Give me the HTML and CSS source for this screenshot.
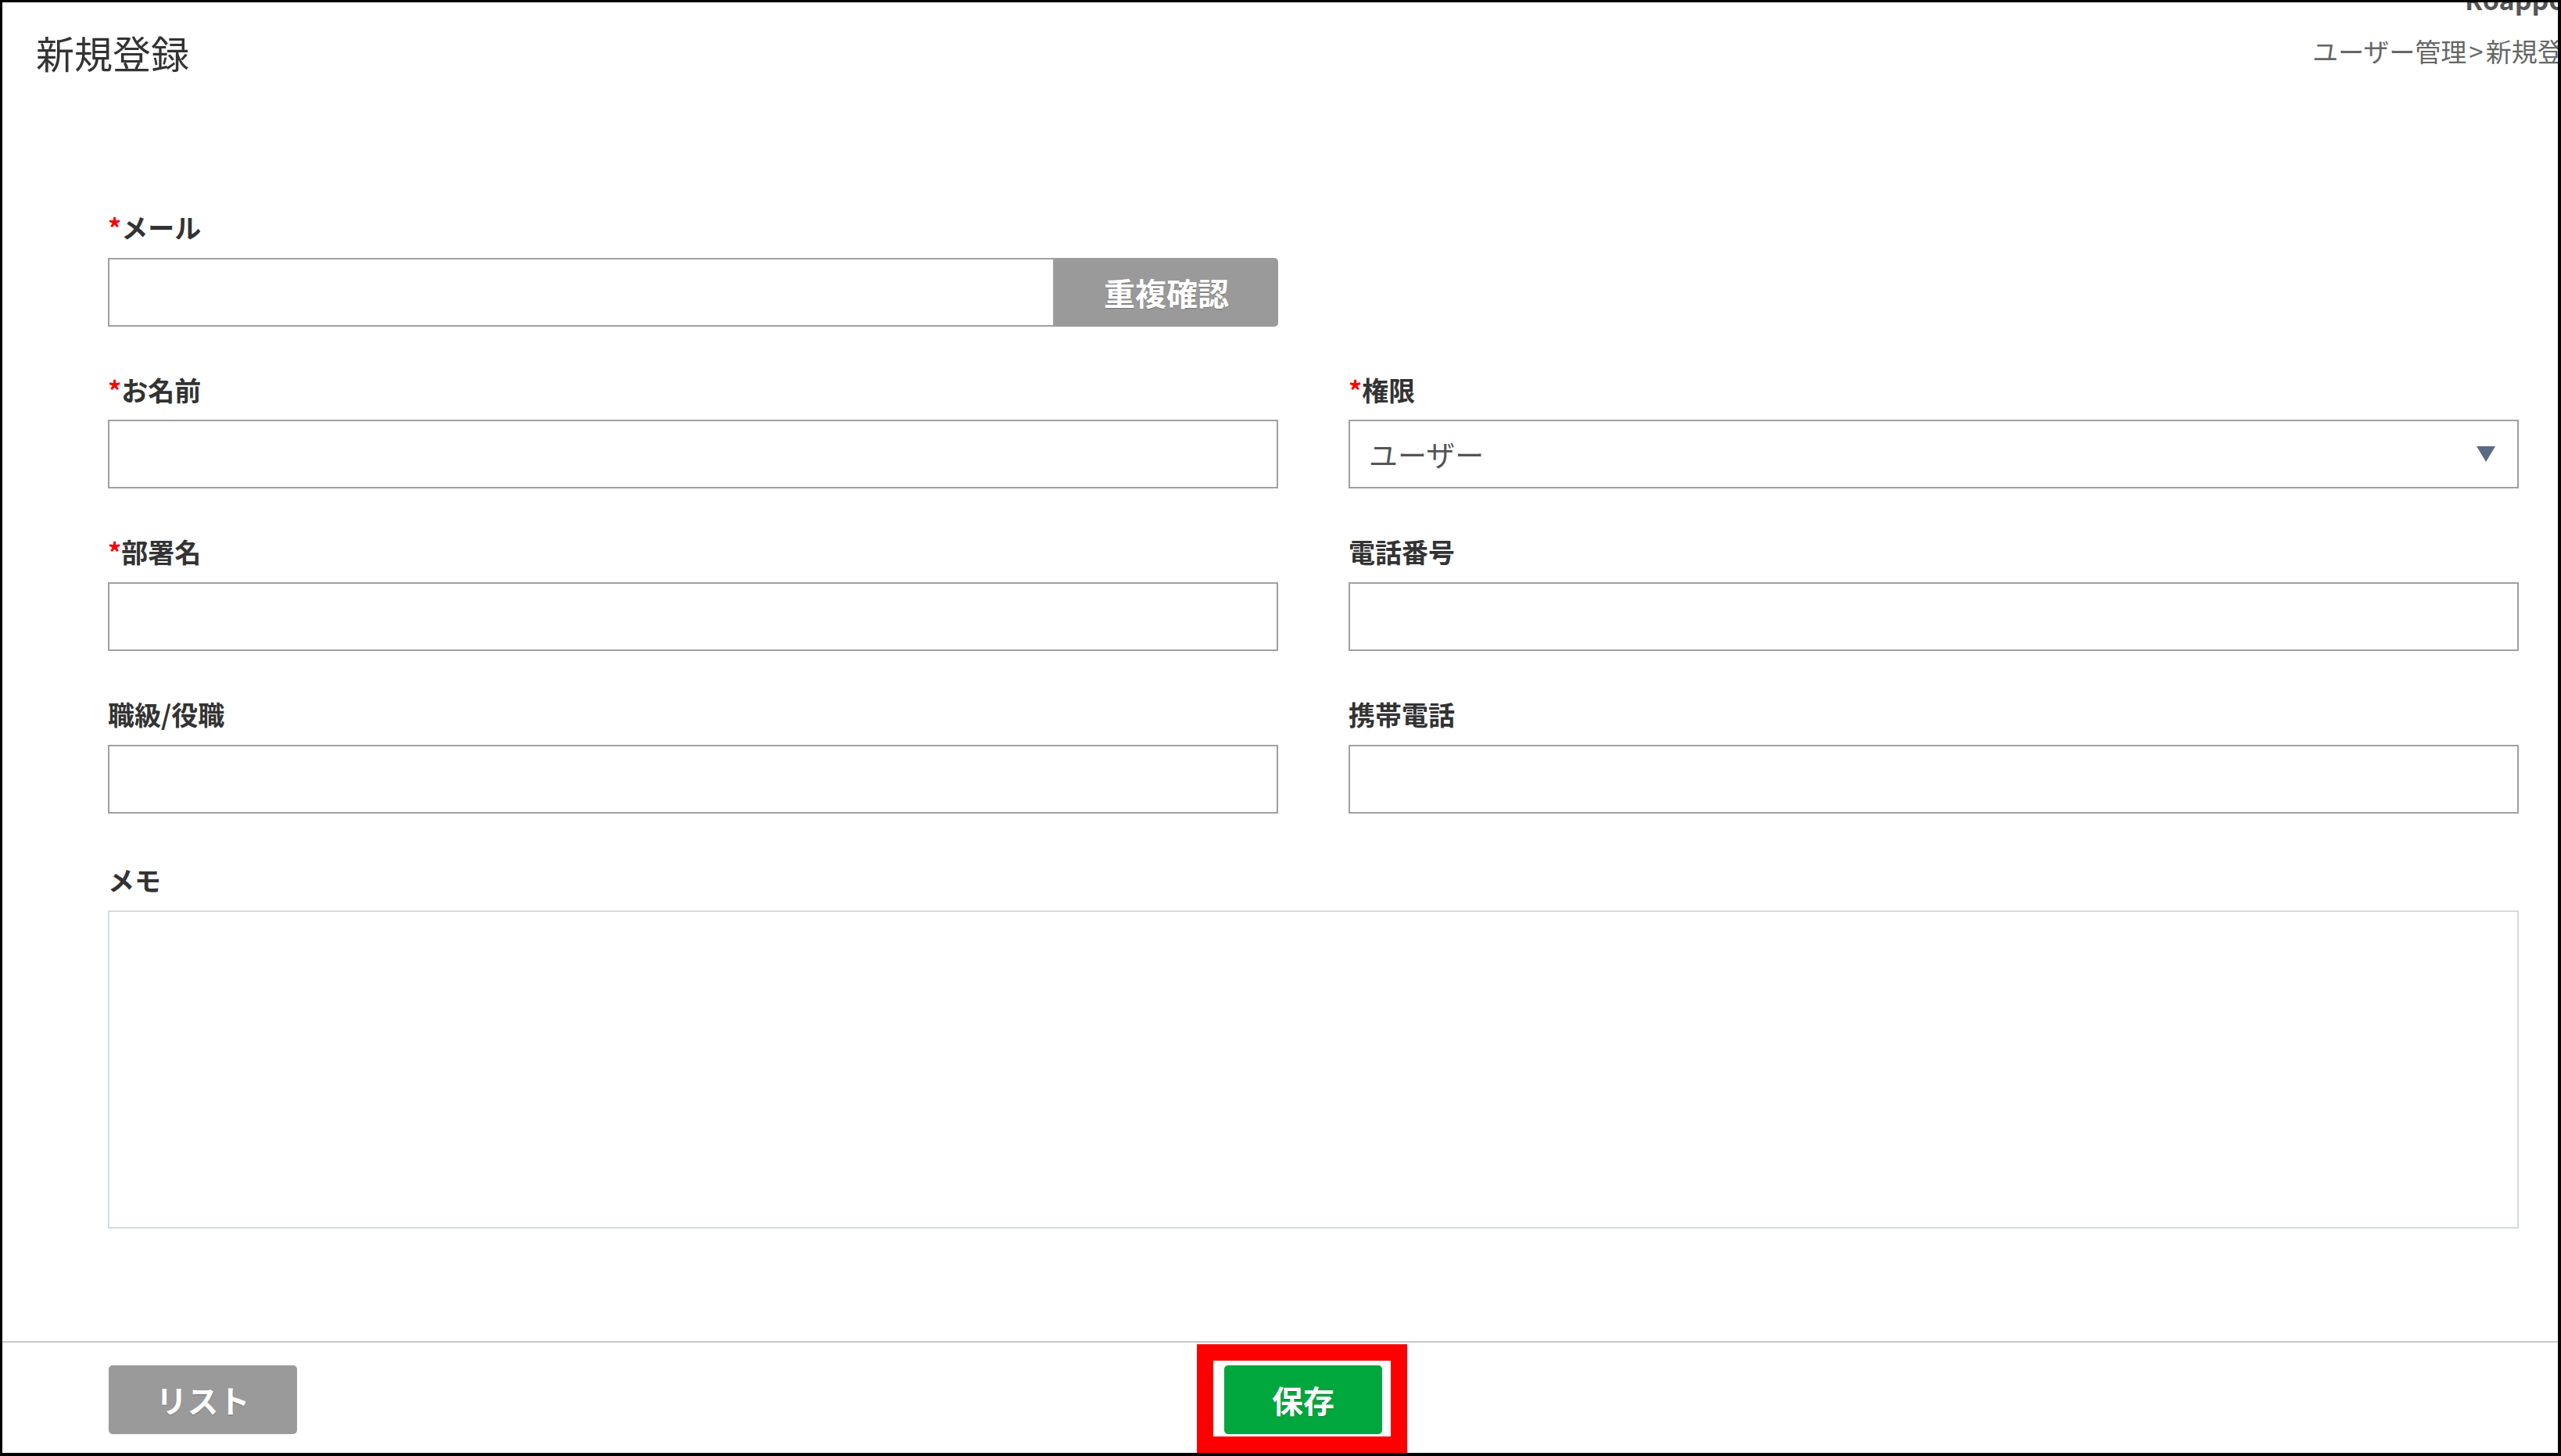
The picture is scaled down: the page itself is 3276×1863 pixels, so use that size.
FILE: index.html
```html
<!DOCTYPE html>
<html lang="ja">
<head>
<meta charset="utf-8">
<title>新規登録</title>
<link rel="stylesheet" href="styles.css">
</head>
<body>
<div class="frame">
  <header class="header">
    <h1 class="title">新規登録</h1>
    <div class="crumbs">
      <div class="user">Roappo</div>
      <div class="breadcrumb">ユーザー管理<span class="sep">&gt;</span>新規登録</div>
    </div>
  </header>

  <main class="form">
    <div class="field">
      <label class="field-label"><span class="req">*</span>メール</label>
      <div class="input-group">
        <div class="input grow"></div>
        <button class="btn-check" type="button">重複確認</button>
      </div>
    </div>
    <div class="field empty"></div>

    <div class="field">
      <label class="field-label"><span class="req">*</span>お名前</label>
      <div class="input"></div>
    </div>
    <div class="field">
      <label class="field-label"><span class="req">*</span>権限</label>
      <div class="input select">
        <span class="select-text">ユーザー</span>
        <svg class="caret" width="24" height="20" viewBox="0 0 24 20"><polygon points="0,0 24,0 12,20" fill="#5b6b86"/></svg>
      </div>
    </div>

    <div class="field">
      <label class="field-label"><span class="req">*</span>部署名</label>
      <div class="input"></div>
    </div>
    <div class="field">
      <label class="field-label">電話番号</label>
      <div class="input"></div>
    </div>

    <div class="field">
      <label class="field-label">職級/役職</label>
      <div class="input"></div>
    </div>
    <div class="field">
      <label class="field-label">携帯電話</label>
      <div class="input"></div>
    </div>

    <div class="field memo">
      <label class="field-label">メモ</label>
      <div class="textarea"></div>
    </div>
  </main>

  <footer class="footer">
    <button class="btn btn-list" type="button">リスト</button>
    <div class="annot">
      <button class="btn btn-save" type="button">保存</button>
    </div>
  </footer>
</div>
</body>
</html>
```

FILE: styles.css
```css
* {
  box-sizing: border-box;
}

html,
body {
  margin: 0;
  padding: 0;
  background: #fff;
}

body {
  font-family: "Noto Sans CJK JP", "Noto Sans", sans-serif;
  color: #333;
}

.frame {
  width: 3276px;
  height: 1863px;
  border-style: solid;
  border-color: #000;
  border-width: 3px 4px 4px 3px;
  overflow: hidden;
  display: flex;
  flex-direction: column;
  background: #fff;
}

/* header */
.header {
  display: flex;
  align-items: flex-start;
  flex: none;
}

.title {
  margin: 35px 0 0 43px;
  font-size: 49px;
  line-height: 1.2;
  font-weight: 400;
  color: #333;
  white-space: nowrap;
}

.crumbs {
  margin-left: auto;
  margin-right: -60px;
  width: 374px;
  flex: none;
  display: flex;
  flex-direction: column;
}

.user {
  margin-top: -21px;
  padding-left: 195px;
  font-size: 34px;
  line-height: 1;
  font-weight: 700;
  color: #555;
  white-space: nowrap;
}

.breadcrumb {
  margin-top: 30px;
  font-size: 33px;
  line-height: 1.2;
  color: #666;
  white-space: nowrap;
}

.sep {
  margin: 0 3px;
}

/* form */
.form {
  flex: 1;
  min-height: 0;
  padding: 174px 50px 0 135px;
  display: grid;
  grid-template-columns: 1fr 1fr;
  column-gap: 90px;
  row-gap: 61px;
  align-content: start;
}

.field {
  display: flex;
  flex-direction: column;
}

.field-label {
  font-size: 34px;
  line-height: 1.2;
  font-weight: 700;
  color: #333;
  margin-bottom: 18px;
}

.req {
  color: #f00;
}

.input {
  height: 88px;
  border: 2px solid #a0a0a0;
  background: #fff;
}

.input-group {
  display: flex;
}

.grow {
  flex: 1;
}

.btn-check {
  width: 286px;
  height: 88px;
  border: none;
  border-radius: 0 5px 5px 0;
  background: #9a9a9a;
  color: #fff;
  font-family: inherit;
  font-size: 40px;
  font-weight: 700;
  text-shadow: 0 1px 1px rgba(0, 0, 0, 0.25);
  padding: 0;
}

.select {
  display: flex;
  align-items: center;
  padding: 0 28px 0 24px;
}

.select-text {
  font-size: 37px;
  color: #555;
}

.caret {
  margin-left: auto;
  display: block;
}

.memo {
  grid-column: 1 / 3;
  margin-top: 4px;
}

.textarea {
  height: 407px;
  border: 2px solid #d5dbe3;
  background: #fff;
}

/* footer */
.footer {
  flex: none;
  height: 143px;
  border-top: 2px solid #c8c8c8;
  display: flex;
  align-items: flex-start;
  padding: 29px 0 0 136px;
}

.btn {
  height: 88px;
  border: none;
  border-radius: 5px;
  color: #fff;
  font-family: inherit;
  font-size: 40px;
  font-weight: 700;
  text-shadow: 0 1px 1px rgba(0, 0, 0, 0.25);
  padding: 0;
}

.btn-list {
  width: 241px;
  background: #9a9a9a;
}

.annot {
  margin: -27px 0 0 1151px;
  border: 21px solid #f00;
  background: #fff;
  padding: 6px 11px 3px 14px;
}

.btn-save {
  display: block;
  width: 202px;
  background: #00a73c;
}
```
